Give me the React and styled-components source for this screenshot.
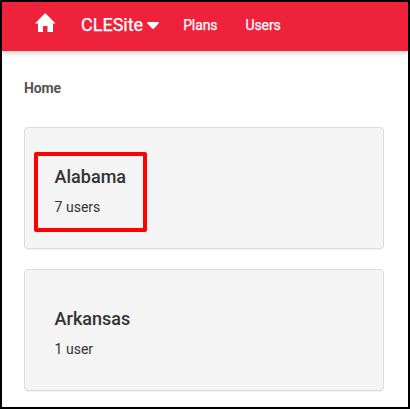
import React from 'react'
import styled, { createGlobalStyle } from 'styled-components'

const colors = {
  primary: '#ee233b',
  card: '#f4f4f4',
  border: '#dcdcdc',
  text: '#333333',
  highlight: '#ff0000',
}

const GlobalStyle = createGlobalStyle`
  * {
    box-sizing: border-box;
  }
  body {
    margin: 0;
    font-family: Roboto, "Liberation Sans", sans-serif;
    color: ${colors.text};
  }
`
const Page = styled.div`
  height: 409px;
  border: 2px solid #000000;
  background-color: #ffffff;
`
const Navbar = styled.nav`
  display: flex;
  align-items: center;
  height: 49px;
  padding: 0 0 3px 33px;
  background-color: ${colors.primary};
  box-shadow: 0 2px 5px rgba(0, 0, 0, 0.2);
  clip-path: inset(0 0 -10px 0);
`
const HomeLink = styled.a`
  display: flex;
  margin: 0 25px 5px 0;
`
const SiteMenu = styled.a`
  display: flex;
  align-items: center;
  gap: 4px;
  margin-right: 24px;
  color: #ffffff;
  font-size: 18px;
  line-height: 24px;
  -webkit-text-stroke: 0.25px #ffffff;
`
const NavLink = styled.a`
  margin-right: 28px;
  color: #ffffff;
  font-size: 14px;
  letter-spacing: -0.1px;
  line-height: 20px;
  -webkit-text-stroke: 0.25px #ffffff;
`
const Caret = styled.svg`
  margin-top: 1px;
`
const Content = styled.main`
  padding: 27px 24px 0 22px;
`
const Breadcrumb = styled.h1`
  margin: 0 0 29px;
  color: #555555;
  font-size: 14px;
  font-weight: 700;
  letter-spacing: -0.1px;
  line-height: 20px;
`
const CardList = styled.div`
  display: flex;
  flex-direction: column;
  gap: 20px;
`
const Card = styled.section`
  position: relative;
  height: 122px;
  padding: 36px 29.6px;
  border: 1px solid ${colors.border};
  border-radius: 4px;
  background-color: ${colors.card};
  box-shadow: 0 1px 1px rgba(0, 0, 0, 0.05);
`
const CardTitle = styled.h2`
  margin: 0;
  font-size: 18px;
  font-weight: 500;
  line-height: 26px;
`
const UserCount = styled.p`
  margin: 7px 0 0;
  font-size: 14px;
  line-height: 20px;
`
// Frame laid over the card's text
const Highlight = styled.div`
  position: absolute;
  top: 24px;
  left: 9px;
  width: 113px;
  height: 80px;
  border: 4px solid ${colors.highlight};
  border-radius: 2px;
`

const sites = [
  { name: 'Alabama', users: 7, isHighlighted: true },
  { name: 'Arkansas', users: 1, isHighlighted: false },
]

function App() {
  return (
    <Page>
      <GlobalStyle />
      <Navbar>
        <HomeLink>
          <svg width="21" height="19" viewBox="0 0 21 19" fill="#ffffff">
            <path d="M10.2 0L20.5 10.5H18V19H12.5V13H8V19H3V10.5H0Z" />
          </svg>
        </HomeLink>
        <SiteMenu>
          CLESite
          <Caret width="12" height="7" viewBox="0 0 12 7" fill="#ffffff">
            <path d="M1 0H11Q12 0 12 1L7 6.5Q6 7.3 5 6.5L0 1Q0 0 1 0Z" />
          </Caret>
        </SiteMenu>
        <NavLink>Plans</NavLink>
        <NavLink>Users</NavLink>
      </Navbar>
      <Content>
        <Breadcrumb>Home</Breadcrumb>
        <CardList>
          {sites.map((site) => (
            <Card key={site.name}>
              <CardTitle>{site.name}</CardTitle>
              <UserCount>{`${site.users} ${site.users === 1 ? 'user' : 'users'}`}</UserCount>
              {site.isHighlighted && <Highlight />}
            </Card>
          ))}
        </CardList>
      </Content>
    </Page>
  )
}

export default App
